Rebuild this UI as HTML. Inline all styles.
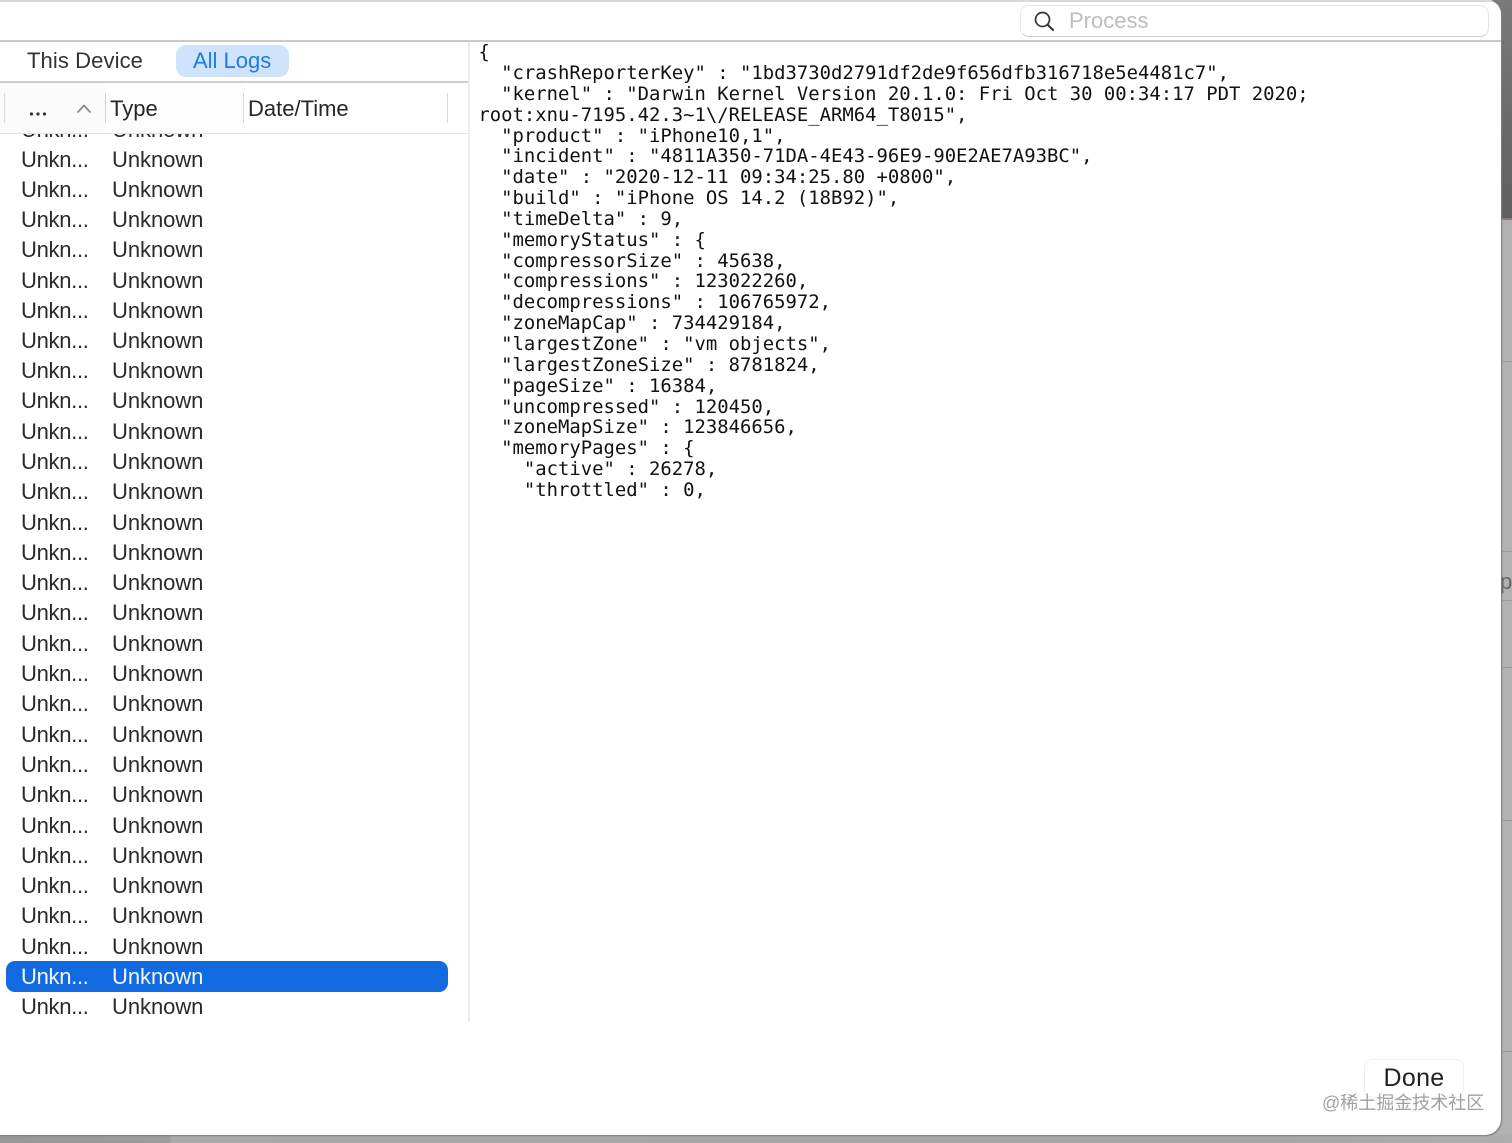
<!DOCTYPE html>
<html>
<head>
<meta charset="utf-8">
<style>
html,body{margin:0;padding:0;width:1512px;height:1143px;overflow:hidden;background:#b1b1b1}
*{box-sizing:border-box}
.a{position:absolute}
#bgtop{left:1480px;top:0;width:32px;height:219px;background:linear-gradient(#7a7a7a,#5f5f5f)}
#pink{left:1500px;top:218px;width:12px;height:2px;background:#8f7b80}
.hl{position:absolute;left:1502px;width:10px;height:1px;background:#9c9c9c}
#bottom{left:0;top:1134px;width:1512px;height:9px;background:linear-gradient(90deg,#989898 0,#9c9c9c 170px,#a9a9a9 172px,#a4a4a4 1200px,#adadad 1512px)}
#dialog{left:-20px;top:0;width:1521px;height:1135px;background:#fff;border-radius:0 14px 16px 14px;box-shadow:1px 1px 1px #7f7f7f;overflow:hidden}
#topline{left:0;top:0;width:1492px;height:2px;background:#d8d8d8}
.s{font-family:"Liberation Sans",sans-serif;color:#262626;white-space:nowrap;line-height:30px}
.m{font-family:"DejaVu Sans Mono","Liberation Mono",monospace;font-size:18.9px;line-height:20.85px;color:#111;white-space:pre;left:478.4px;top:42.2px}
.c1,.c2{position:absolute;font-family:"Liberation Sans",sans-serif;font-size:22px;line-height:30px;color:#2a2a2a;white-space:nowrap}
.c1{left:21px;letter-spacing:-.3px}
.c2{left:112px;letter-spacing:-.05px}
#list{left:0;top:134px;width:468px;height:888px;overflow:hidden}
</style>
</head>
<body>
<div class="a" id="bgtop"></div>
<div class="a" id="pink"></div>
<div class="hl" style="top:361px"></div>
<div class="hl" style="top:551px"></div>
<div class="hl" style="top:600px"></div>
<div class="hl" style="top:667px"></div>
<div class="hl" style="top:820px"></div>
<div class="hl" style="top:1051px"></div>
<div class="a s" style="left:1500px;top:567px;font-size:22px;color:#666">p</div>
<div class="a" id="bottom"></div>
<div class="a" id="dialog"></div>
<div class="a" id="topline"></div>

<!-- toolbar -->
<div class="a" style="left:0;top:40px;width:1501px;height:2px;background:#c9c9c9"></div>
<div class="a" style="left:1020px;top:5px;width:469px;height:32px;background:#fff;border:1px solid #e6e6e6;border-bottom:1.5px solid #cfcfcf;border-radius:9px"></div>
<svg class="a" style="left:1032px;top:10px" width="24" height="22" viewBox="0 0 24 22"><circle cx="10.5" cy="9.5" r="7" fill="none" stroke="#333" stroke-width="1.7"/><path d="M15.6 14.6 L21 20" fill="none" stroke="#333" stroke-width="2.1" stroke-linecap="round"/></svg>
<div class="a s" style="left:1069px;top:6px;font-size:22px;color:#bdbdbd">Process</div>

<!-- segmented -->
<div class="a s" style="left:27px;top:46px;font-size:22px;letter-spacing:.1px;color:#333">This Device</div>
<div class="a" style="left:176px;top:45px;width:113px;height:32px;background:#cfe3fb;border-radius:10px"></div>
<div class="a s" style="left:193px;top:46px;font-size:22px;color:#1f7ae8">All Logs</div>
<div class="a" style="left:0;top:81px;width:468px;height:2px;background:#cdcdcd"></div>
<div class="a" style="left:467.5px;top:42px;width:2px;height:980px;background:#ececec"></div>

<!-- table header -->
<div class="a" style="left:0;top:83px;width:105px;height:50px;background:#fbfbfb"></div>
<div class="a" style="left:105px;top:83px;width:138px;height:50px;background:#fdfdfd"></div>
<div class="a" style="left:0;top:133px;width:468px;height:1px;background:#e2e2e2"></div>
<div class="a" style="left:4px;top:93px;width:1px;height:30px;background:#dcdcdc"></div>
<div class="a" style="left:105px;top:93px;width:1px;height:30px;background:#d6d6d6"></div>
<div class="a" style="left:243px;top:93px;width:1px;height:30px;background:#d6d6d6"></div>
<div class="a" style="left:447px;top:93px;width:1px;height:30px;background:#dcdcdc"></div>
<svg class="a" style="left:29px;top:110px" width="20" height="8" viewBox="0 0 20 8"><circle cx="2.5" cy="4" r="1.6" fill="#333"/><circle cx="9" cy="4" r="1.6" fill="#333"/><circle cx="15.5" cy="4" r="1.6" fill="#333"/></svg>
<svg class="a" style="left:76px;top:103px" width="16" height="11" viewBox="0 0 16 11"><path d="M2 9 L8 2.5 L14 9" fill="none" stroke="#8a8a8a" stroke-width="1.8" stroke-linecap="round" stroke-linejoin="round"/></svg>
<div class="a s" style="left:110px;top:94px;font-size:22px">Type</div>
<div class="a s" style="left:248px;top:94px;font-size:22px">Date/Time</div>

<!-- list -->
<div class="a" id="list">
<div class="c1" style="top:-19px">Unkn...</div><div class="c2" style="top:-19px">Unknown</div>
<div class="c1" style="top:11px">Unkn...</div><div class="c2" style="top:11px">Unknown</div>
<div class="c1" style="top:41px">Unkn...</div><div class="c2" style="top:41px">Unknown</div>
<div class="c1" style="top:71px">Unkn...</div><div class="c2" style="top:71px">Unknown</div>
<div class="c1" style="top:101px">Unkn...</div><div class="c2" style="top:101px">Unknown</div>
<div class="c1" style="top:132px">Unkn...</div><div class="c2" style="top:132px">Unknown</div>
<div class="c1" style="top:162px">Unkn...</div><div class="c2" style="top:162px">Unknown</div>
<div class="c1" style="top:192px">Unkn...</div><div class="c2" style="top:192px">Unknown</div>
<div class="c1" style="top:222px">Unkn...</div><div class="c2" style="top:222px">Unknown</div>
<div class="c1" style="top:252px">Unkn...</div><div class="c2" style="top:252px">Unknown</div>
<div class="c1" style="top:283px">Unkn...</div><div class="c2" style="top:283px">Unknown</div>
<div class="c1" style="top:313px">Unkn...</div><div class="c2" style="top:313px">Unknown</div>
<div class="c1" style="top:343px">Unkn...</div><div class="c2" style="top:343px">Unknown</div>
<div class="c1" style="top:374px">Unkn...</div><div class="c2" style="top:374px">Unknown</div>
<div class="c1" style="top:404px">Unkn...</div><div class="c2" style="top:404px">Unknown</div>
<div class="c1" style="top:434px">Unkn...</div><div class="c2" style="top:434px">Unknown</div>
<div class="c1" style="top:464px">Unkn...</div><div class="c2" style="top:464px">Unknown</div>
<div class="c1" style="top:495px">Unkn...</div><div class="c2" style="top:495px">Unknown</div>
<div class="c1" style="top:525px">Unkn...</div><div class="c2" style="top:525px">Unknown</div>
<div class="c1" style="top:555px">Unkn...</div><div class="c2" style="top:555px">Unknown</div>
<div class="c1" style="top:586px">Unkn...</div><div class="c2" style="top:586px">Unknown</div>
<div class="c1" style="top:616px">Unkn...</div><div class="c2" style="top:616px">Unknown</div>
<div class="c1" style="top:646px">Unkn...</div><div class="c2" style="top:646px">Unknown</div>
<div class="c1" style="top:677px">Unkn...</div><div class="c2" style="top:677px">Unknown</div>
<div class="c1" style="top:707px">Unkn...</div><div class="c2" style="top:707px">Unknown</div>
<div class="c1" style="top:737px">Unkn...</div><div class="c2" style="top:737px">Unknown</div>
<div class="c1" style="top:767px">Unkn...</div><div class="c2" style="top:767px">Unknown</div>
<div class="c1" style="top:798px">Unkn...</div><div class="c2" style="top:798px">Unknown</div>
<div class="a" style="left:6px;top:827px;width:442px;height:31px;background:#126ae0;border-radius:9px"></div>
<div class="c1" style="top:828px;color:#f4f8ff">Unkn...</div><div class="c2" style="top:828px;color:#f4f8ff">Unknown</div>
<div class="c1" style="top:858px">Unkn...</div><div class="c2" style="top:858px">Unknown</div>
</div>

<!-- log text -->
<div class="a m">{
  "crashReporterKey" : "1bd3730d2791df2de9f656dfb316718e5e4481c7",
  "kernel" : "Darwin Kernel Version 20.1.0: Fri Oct 30 00:34:17 PDT 2020;
root:xnu-7195.42.3~1\/RELEASE_ARM64_T8015",
  "product" : "iPhone10,1",
  "incident" : "4811A350-71DA-4E43-96E9-90E2AE7A93BC",
  "date" : "2020-12-11 09:34:25.80 +0800",
  "build" : "iPhone OS 14.2 (18B92)",
  "timeDelta" : 9,
  "memoryStatus" : {
  "compressorSize" : 45638,
  "compressions" : 123022260,
  "decompressions" : 106765972,
  "zoneMapCap" : 734429184,
  "largestZone" : "vm objects",
  "largestZoneSize" : 8781824,
  "pageSize" : 16384,
  "uncompressed" : 120450,
  "zoneMapSize" : 123846656,
  "memoryPages" : {
    "active" : 26278,
    "throttled" : 0,</div>

<!-- done -->
<div class="a" style="left:1364px;top:1059px;width:100px;height:39px;background:#fff;border:1px solid #eee;border-radius:8px"></div>
<div class="a s" style="left:1364px;top:1063px;width:100px;text-align:center;font-size:25px;letter-spacing:.3px;color:#222">Done</div>
<div class="a" style="left:1322px;top:1091px;font-family:'Liberation Sans','Noto Sans CJK SC',sans-serif;font-size:18px;line-height:24px;color:#a0a0a0;white-space:nowrap">@稀土掘金技术社区</div>
</body>
</html>
